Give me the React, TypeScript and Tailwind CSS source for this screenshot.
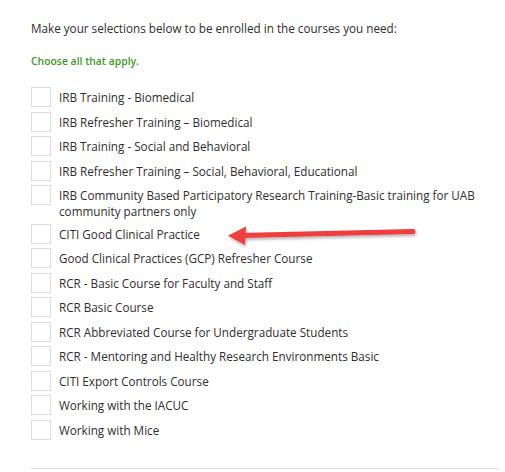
import React from "react";

const items: string[][] = [
  ["IRB Training - Biomedical"],
  ["IRB Refresher Training – Biomedical"],
  ["IRB Training - Social and Behavioral"],
  ["IRB Refresher Training – Social, Behavioral, Educational"],
  ["IRB Community Based Participatory Research Training-Basic training for UAB", "community partners only"],
  ["CITI Good Clinical Practice"],
  ["Good Clinical Practices (GCP) Refresher Course"],
  ["RCR - Basic Course for Faculty and Staff"],
  ["RCR Basic Course"],
  ["RCR Abbreviated Course for Undergraduate Students"],
  ["RCR - Mentoring and Healthy Research Environments Basic"],
  ["CITI Export Controls Course"],
  ["Working with the IACUC"],
  ["Working with Mice"],
];

export default function App() {
  return (
    <div
      className="relative w-[505px] h-[472px] bg-white overflow-hidden text-[#2e2e2e] text-[11.7px]"
      style={{ fontFamily: '"Open Sans", sans-serif' }}
    >
      <div className="pl-[31px] pr-[7px] pt-[20px]">
        <p className="leading-[17px] whitespace-nowrap">Make your selections below to be enrolled in the courses you need:</p>
        <p className="mt-[16px] leading-[17px] text-[#3a9a1c] text-[10.4px] font-semibold whitespace-nowrap">Choose all that apply.</p>
        <div className="mt-[17px] flex flex-col gap-[4.5px]">
          {items.map((lines, i) => (
            <div key={i} className="flex items-start">
              <div className="w-[20px] h-[20px] border border-[#dcdcdc] bg-white shrink-0" />
              <div className="ml-[8px] leading-[16px] pt-[2px]">
                {lines.map((l, j) => (
                  <div key={j} className="whitespace-nowrap">{l}</div>
                ))}
              </div>
            </div>
          ))}
        </div>
        <div className="mt-[28px] border-t border-[#dedede]" />
      </div>
      <svg className="absolute left-0 top-0" width="505" height="472" viewBox="0 0 505 472">
        <defs>
          <filter id="sh" x="-10%" y="-50%" width="120%" height="200%">
            <feDropShadow dx="1" dy="2" stdDeviation="1.5" floodColor="#000" floodOpacity="0.3" />
          </filter>
        </defs>
        <g filter="url(#sh)">
          <line x1="413" y1="231.5" x2="240" y2="235.5" stroke="#f03c3c" strokeWidth="5" strokeLinecap="round" />
          <polygon points="228,235.8 246,226.5 245,245" fill="#f03c3c" />
        </g>
      </svg>
    </div>
  );
}
